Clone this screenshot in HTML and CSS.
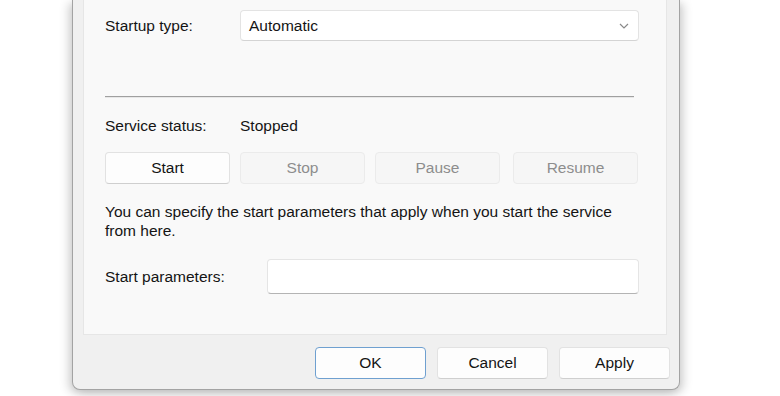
FILE: index.html
```html
<!DOCTYPE html>
<html>
<head>
  <meta charset="UTF-8">
  <title>Service Properties</title>
  <link rel="stylesheet" href="styles.css">
</head>
<body>
  <div class="window">
    <div class="panel">
      <div class="row startup-row">
        <span class="label">Startup type:</span>
        <div class="select">
          <span>Automatic</span>
          <svg class="chevron" width="10" height="6" viewBox="0 0 10 6">
            <path d="M1 1 L5 5 L9 1" fill="none" stroke="#8a8a8a" stroke-width="1.2"/>
          </svg>
        </div>
      </div>

      <div class="separator"></div>

      <div class="row status-row">
        <span class="label">Service status:</span>
        <span>Stopped</span>
      </div>

      <div class="service-buttons">
        <button class="btn">Start</button>
        <button class="btn" disabled>Stop</button>
        <button class="btn" disabled>Pause</button>
        <button class="btn resume" disabled>Resume</button>
      </div>

      <p class="hint">You can specify the start parameters that apply when you start the service from here.</p>

      <div class="row params-row">
        <span class="label wide">Start parameters:</span>
        <input type="text" class="params-input">
      </div>
    </div>

    <div class="footer">
      <button class="btn dialog-btn default">OK</button>
      <button class="btn dialog-btn">Cancel</button>
      <button class="btn dialog-btn">Apply</button>
    </div>
  </div>
</body>
</html>
```

FILE: styles.css
```css
body {
  margin: 0;
  background-color: #ffffff;
  font-family: "Liberation Sans", Arial, sans-serif;
  font-size: 15.5px;
  color: #141414;
  height: 396px;
  overflow: hidden;
}
.window {
  margin-left: 72px;
  width: 586px;
  height: 389px;
  background-color: #f0f0f0;
  border: 1px solid #a3a3a3;
  border-top: none;
  border-radius: 0 0 8px 8px;
  box-shadow: -4px 3px 10px rgba(0, 0, 0, 0.16), 4px 3px 10px rgba(0, 0, 0, 0.16);
  padding: 0 10px;
  display: flex;
  flex-direction: column;
}
.panel {
  width: 584px;
  height: 335px;
  box-sizing: border-box;
  background-color: #f9f9f9;
  border: 1px solid #e6e6e6;
  border-top: none;
  padding: 10px 27px 0 21px;
  display: flex;
  flex-direction: column;
}
.row {
  display: flex;
  align-items: center;
}
.label {
  width: 135px;
  flex-shrink: 0;
}
.label.wide {
  width: 162px;
}
.select {
  flex: 1;
  height: 31px;
  box-sizing: border-box;
  background-color: #ffffff;
  border: 1px solid #e3e3e3;
  border-bottom-color: #d4d4d4;
  border-radius: 4px;
  display: flex;
  align-items: center;
  justify-content: space-between;
  padding: 0 9px 0 8px;
}
.chevron {
  margin-top: 1px;
}
.separator {
  height: 1px;
  background-color: #a0a0a0;
  margin: 55px 5px 0 0;
  box-shadow: 0 1px 0 #e8e8e8;
}
.status-row {
  margin-top: 19px;
  height: 19px;
}
.service-buttons {
  display: flex;
  margin-top: 17px;
  gap: 10px;
}
.btn {
  font-family: "Liberation Sans", Arial, sans-serif;
  font-size: 15.5px;
  color: #141414;
  background-color: #fdfdfd;
  border: 1px solid #e2e2e2;
  border-bottom-color: #cfcfcf;
  border-radius: 4px;
  height: 32px;
  width: 125px;
  padding: 0;
}
.btn:disabled {
  color: #8d8d8d;
  background-color: #f6f6f6;
  border-color: #ebebeb;
}
.service-buttons .resume {
  margin-left: 3px;
}
.hint {
  margin: 18px 0 0 0;
  line-height: 19px;
  padding-right: 10px;
}
.params-row {
  margin-top: 19px;
}
.params-input {
  flex: 1;
  height: 35px;
  box-sizing: border-box;
  background-color: #ffffff;
  border: 1px solid #e5e5e5;
  border-bottom-color: #b4b4b4;
  border-radius: 4px;
}
.footer {
  display: flex;
  justify-content: flex-end;
  gap: 11px;
  margin: 12px -1px 0 0;
}
.dialog-btn {
  width: 111px;
}
.dialog-btn.default {
  border-color: #6fa0d0;
}
```
